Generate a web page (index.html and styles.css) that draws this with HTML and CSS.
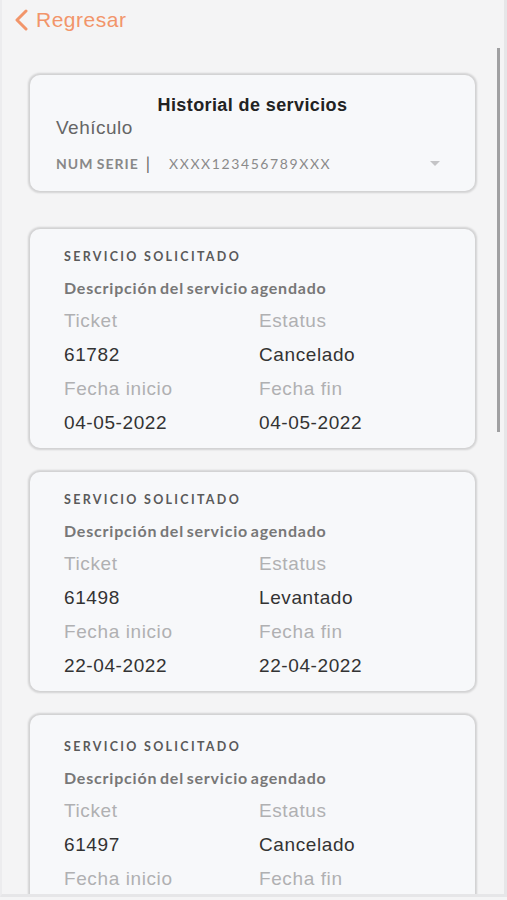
FILE: index.html
```html
<!DOCTYPE html>
<html lang="es">
<head>
    <meta charset="UTF-8">
    <meta name="viewport" content="width=device-width, initial-scale=1.0">
    <title>Historial de servicios</title>
    <link rel="stylesheet" href="styles.css">
</head>
<body>
    <div class="screen">
        <header class="topbar">
            <a class="back" href="#">
                <svg class="back-icon" width="16" height="22" viewBox="0 0 16 22">
                    <path d="M13 2 L4 11 L13 20" fill="none" stroke="#f2956a" stroke-width="3" stroke-linecap="round" stroke-linejoin="round"/>
                </svg>
                Regresar
            </a>
        </header>

        <div class="scroll-thumb"></div>

        <main class="content">
            <section class="card vehicle-card">
                <h1>Historial de servicios</h1>
                <p class="vehicle-label">Vehículo</p>
                <div class="serie-row">
                    <span class="serie-label">NUM SERIE</span>
                    <span class="serie-sep">|</span>
                    <span class="serie-value">XXXX123456789XXX</span>
                    <span class="caret"></span>
                </div>
            </section>

            <section class="card service-card">
                <h2>SERVICIO SOLICITADO</h2>
                <p class="desc">Descripción del servicio agendado</p>
                <div class="fields">
                    <span class="label">Ticket</span>
                    <span class="label">Estatus</span>
                    <span class="value">61782</span>
                    <span class="value">Cancelado</span>
                    <span class="label">Fecha inicio</span>
                    <span class="label">Fecha fin</span>
                    <span class="value">04-05-2022</span>
                    <span class="value">04-05-2022</span>
                </div>
            </section>

            <section class="card service-card">
                <h2>SERVICIO SOLICITADO</h2>
                <p class="desc">Descripción del servicio agendado</p>
                <div class="fields">
                    <span class="label">Ticket</span>
                    <span class="label">Estatus</span>
                    <span class="value">61498</span>
                    <span class="value">Levantado</span>
                    <span class="label">Fecha inicio</span>
                    <span class="label">Fecha fin</span>
                    <span class="value">22-04-2022</span>
                    <span class="value">22-04-2022</span>
                </div>
            </section>

            <!-- last card runs past the bottom of the screen -->
            <section class="card service-card last">
                <h2>SERVICIO SOLICITADO</h2>
                <p class="desc">Descripción del servicio agendado</p>
                <div class="fields">
                    <span class="label">Ticket</span>
                    <span class="label">Estatus</span>
                    <span class="value">61497</span>
                    <span class="value">Cancelado</span>
                    <span class="label">Fecha inicio</span>
                    <span class="label">Fecha fin</span>
                </div>
            </section>
        </main>
    </div>
</body>
</html>
```

FILE: styles.css
```css
body {
    font-family: "Liberation Sans", Arial, sans-serif;
    background-color: #f4f4f5;
    margin: 0;
    padding: 0;
}
.screen {
    position: relative;
    height: 897px;
    overflow: hidden;
    border-right: 3px solid #e6e6e8;
    border-bottom: 3px solid #e6e6e8;
    border-left: 2px solid #ececee;
    box-sizing: border-box;
}
.topbar {
    height: 40px;
    display: flex;
    align-items: center;
    padding-left: 11px;
}
.back {
    display: flex;
    align-items: center;
    gap: 7px;
    color: #f2956a;
    font-size: 21px;
    letter-spacing: 0.5px;
    text-decoration: none;
}
.back-icon {
    display: block;
}
.scroll-thumb {
    position: absolute;
    top: 48px;
    left: 495px;
    width: 3px;
    height: 384px;
    background: #a0a0a2;
}
.content {
    padding: 35px 29px 0 28px;
    display: flex;
    flex-direction: column;
    gap: 24px;
}
.card {
    background: #f7f8fa;
    border-radius: 10px;
    box-shadow: 0 0 2px 2px rgba(0, 0, 0, 0.14);
}
.vehicle-card {
    padding: 21px 26px 19px;
    margin-bottom: 14px;
}
.vehicle-card h1 {
    margin: 0;
    text-align: center;
    font-size: 18px;
    letter-spacing: 0.4px;
    line-height: 18px;
    color: #222;
}
.vehicle-label {
    margin: 4px 0 0;
    font-size: 19px;
    letter-spacing: 0.5px;
    line-height: 20px;
    color: #666;
}
.serie-row {
    display: flex;
    align-items: center;
    margin-top: 16px;
    height: 18px;
    font-family: Lato, sans-serif;
}
.serie-label {
    font-size: 14px;
    font-weight: bold;
    color: #888;
    letter-spacing: 1px;
    word-spacing: -1px;
}
.serie-sep {
    margin-left: 7px;
    font-size: 17px;
    color: #666;
}
.serie-value {
    margin-left: 19px;
    font-size: 14px;
    color: #8a8a8a;
    letter-spacing: 1.6px;
}
.caret {
    margin-left: auto;
    margin-right: 9px;
    width: 0;
    height: 0;
    border-left: 5px solid transparent;
    border-right: 5px solid transparent;
    border-top: 5px solid #c4c4c6;
}
.service-card {
    padding: 20px 28px 13px 34px;
}
.service-card.last {
    padding-top: 24px;
}
.service-card h2 {
    margin: 0;
    font-family: Lato, sans-serif;
    font-size: 12.5px;
    line-height: 16px;
    font-weight: bold;
    letter-spacing: 2.3px;
    color: #5a5a5a;
}
.desc {
    margin: 14px 0 0;
    font-family: Lato, sans-serif;
    font-size: 16px;
    line-height: 18px;
    font-weight: bold;
    letter-spacing: 0.8px;
    word-spacing: -2px;
    color: #777;
}
.fields {
    display: grid;
    grid-template-columns: 195px 1fr;
    row-gap: 10px;
    margin-top: 12px;
}
.label,
.value {
    font-size: 19px;
    letter-spacing: 0.6px;
    line-height: 24px;
}
.label {
    color: #b0b0b2;
}
.value {
    color: #333;
}
```
